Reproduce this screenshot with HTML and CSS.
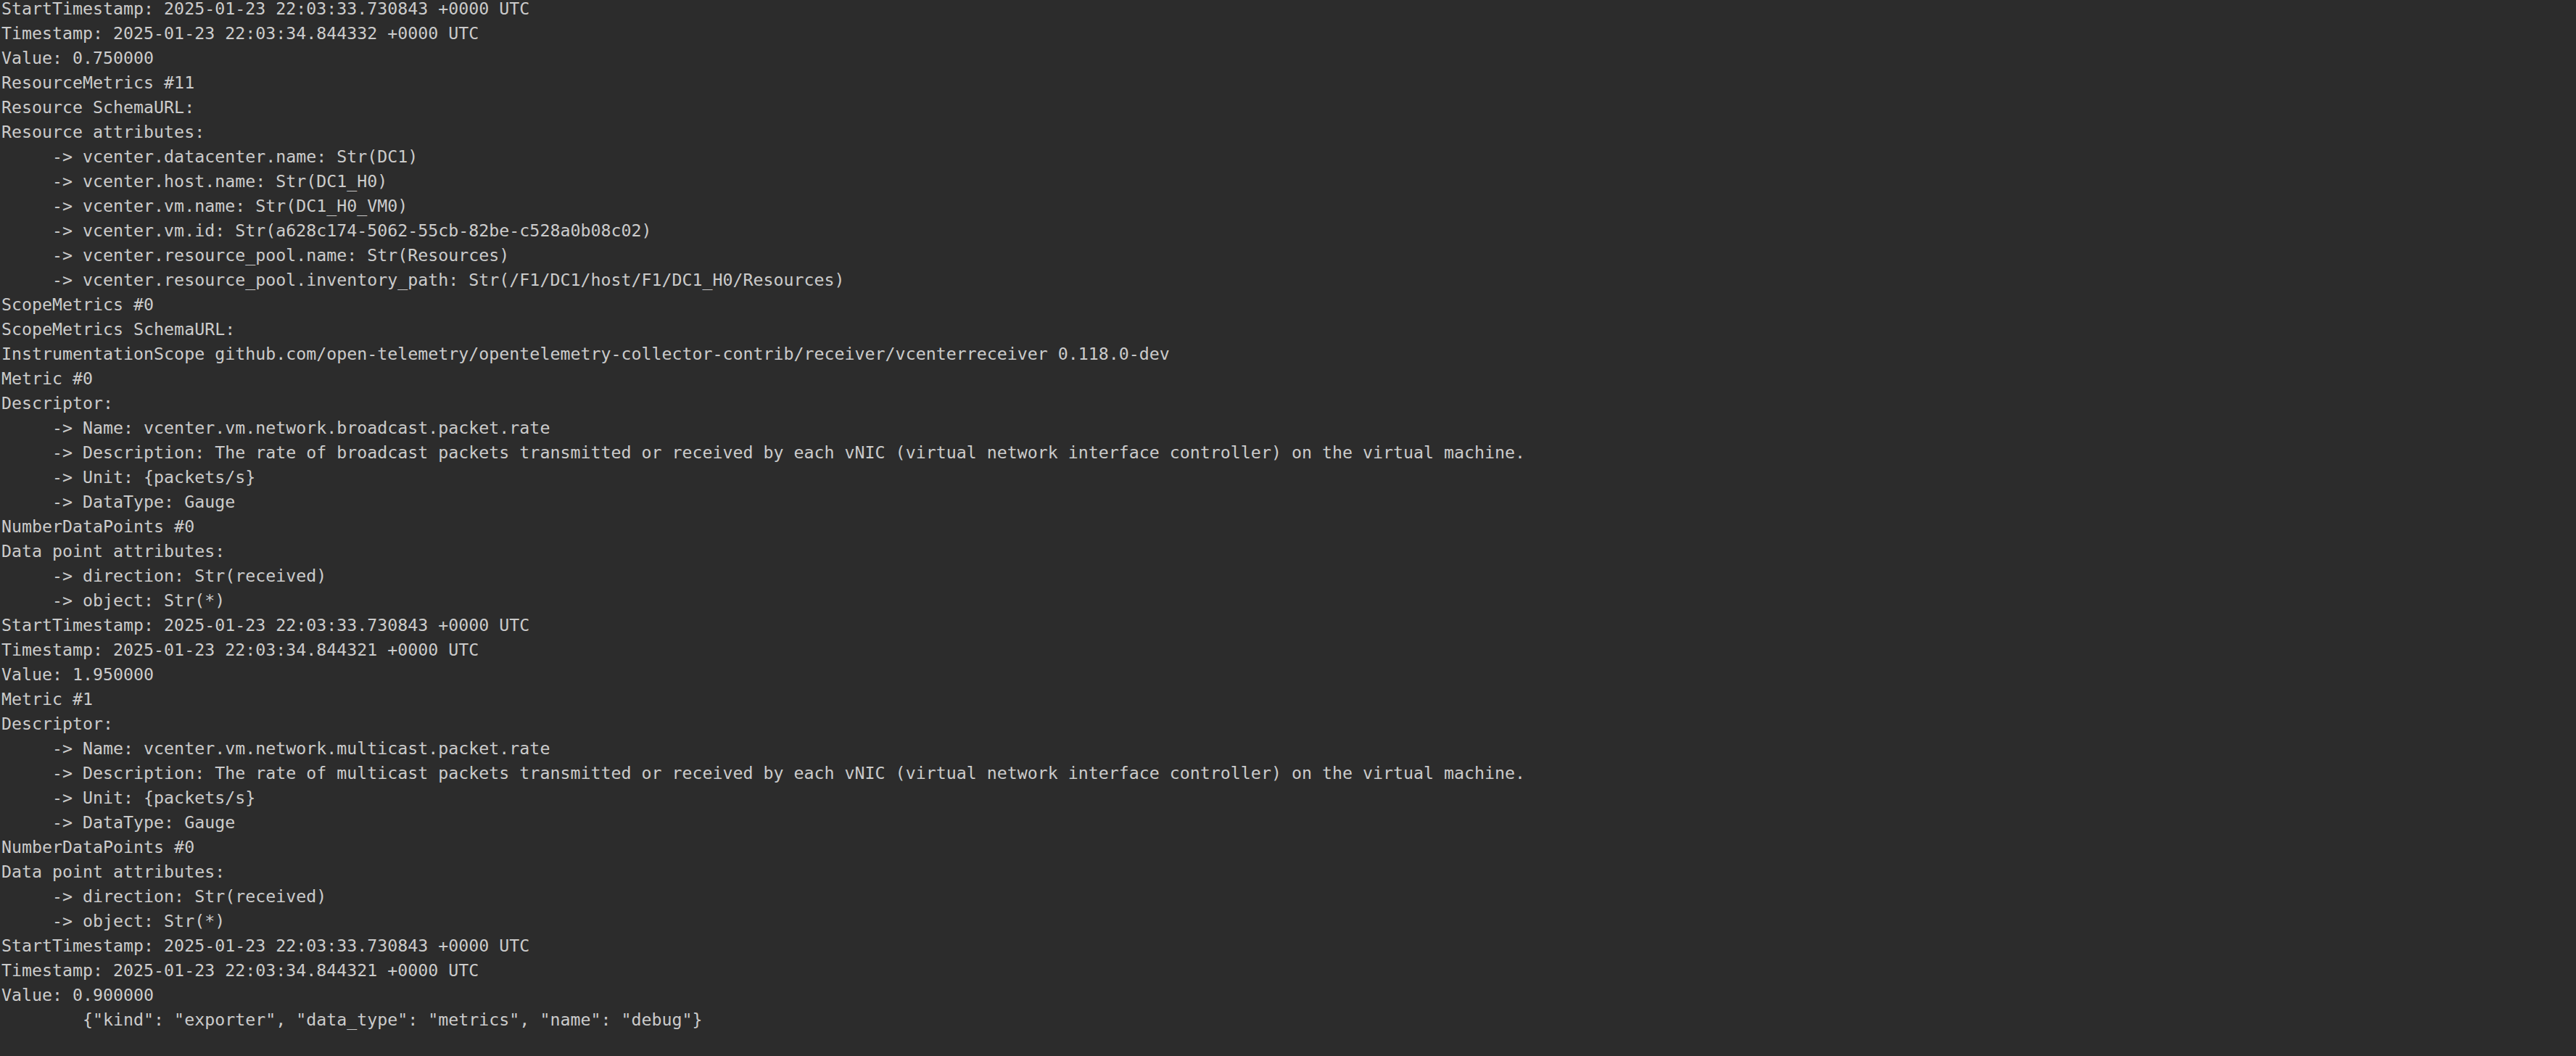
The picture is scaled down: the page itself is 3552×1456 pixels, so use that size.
FILE: index.html
```html
<!DOCTYPE html>
<html lang="en">

<head>
  <meta charset="UTF-8">
  <title>otelcol debug exporter</title>
  <link rel="stylesheet" href="styles.css">
</head>

<body>
  <!-- terminal output -->
  <pre class="log">StartTimestamp: 2025-01-23 22:03:33.730843 +0000 UTC
Timestamp: 2025-01-23 22:03:34.844332 +0000 UTC
Value: 0.750000
ResourceMetrics #11
Resource SchemaURL: 
Resource attributes:
     -> vcenter.datacenter.name: Str(DC1)
     -> vcenter.host.name: Str(DC1_H0)
     -> vcenter.vm.name: Str(DC1_H0_VM0)
     -> vcenter.vm.id: Str(a628c174-5062-55cb-82be-c528a0b08c02)
     -> vcenter.resource_pool.name: Str(Resources)
     -> vcenter.resource_pool.inventory_path: Str(/F1/DC1/host/F1/DC1_H0/Resources)
ScopeMetrics #0
ScopeMetrics SchemaURL: 
InstrumentationScope github.com/open-telemetry/opentelemetry-collector-contrib/receiver/vcenterreceiver 0.118.0-dev
Metric #0
Descriptor:
     -> Name: vcenter.vm.network.broadcast.packet.rate
     -> Description: The rate of broadcast packets transmitted or received by each vNIC (virtual network interface controller) on the virtual machine.
     -> Unit: {packets/s}
     -> DataType: Gauge
NumberDataPoints #0
Data point attributes:
     -> direction: Str(received)
     -> object: Str(*)
StartTimestamp: 2025-01-23 22:03:33.730843 +0000 UTC
Timestamp: 2025-01-23 22:03:34.844321 +0000 UTC
Value: 1.950000
Metric #1
Descriptor:
     -> Name: vcenter.vm.network.multicast.packet.rate
     -> Description: The rate of multicast packets transmitted or received by each vNIC (virtual network interface controller) on the virtual machine.
     -> Unit: {packets/s}
     -> DataType: Gauge
NumberDataPoints #0
Data point attributes:
     -> direction: Str(received)
     -> object: Str(*)
StartTimestamp: 2025-01-23 22:03:33.730843 +0000 UTC
Timestamp: 2025-01-23 22:03:34.844321 +0000 UTC
Value: 0.900000
        {"kind": "exporter", "data_type": "metrics", "name": "debug"}</pre>
</body>

</html>
```

FILE: styles.css
```css
* {
  margin: 0;
  padding: 0;
  box-sizing: border-box;
}

html,
body {
  height: 100%;
  background-color: #2c2c2c;
}

/* terminal text */
.log {
  margin-top: -5px;
  padding-left: 2px;
  font-family: "DejaVu Sans Mono", "Liberation Mono", monospace;
  font-size: 23.28px;
  line-height: 34px;
  color: #cbcbcb;
  white-space: pre;
}
```
